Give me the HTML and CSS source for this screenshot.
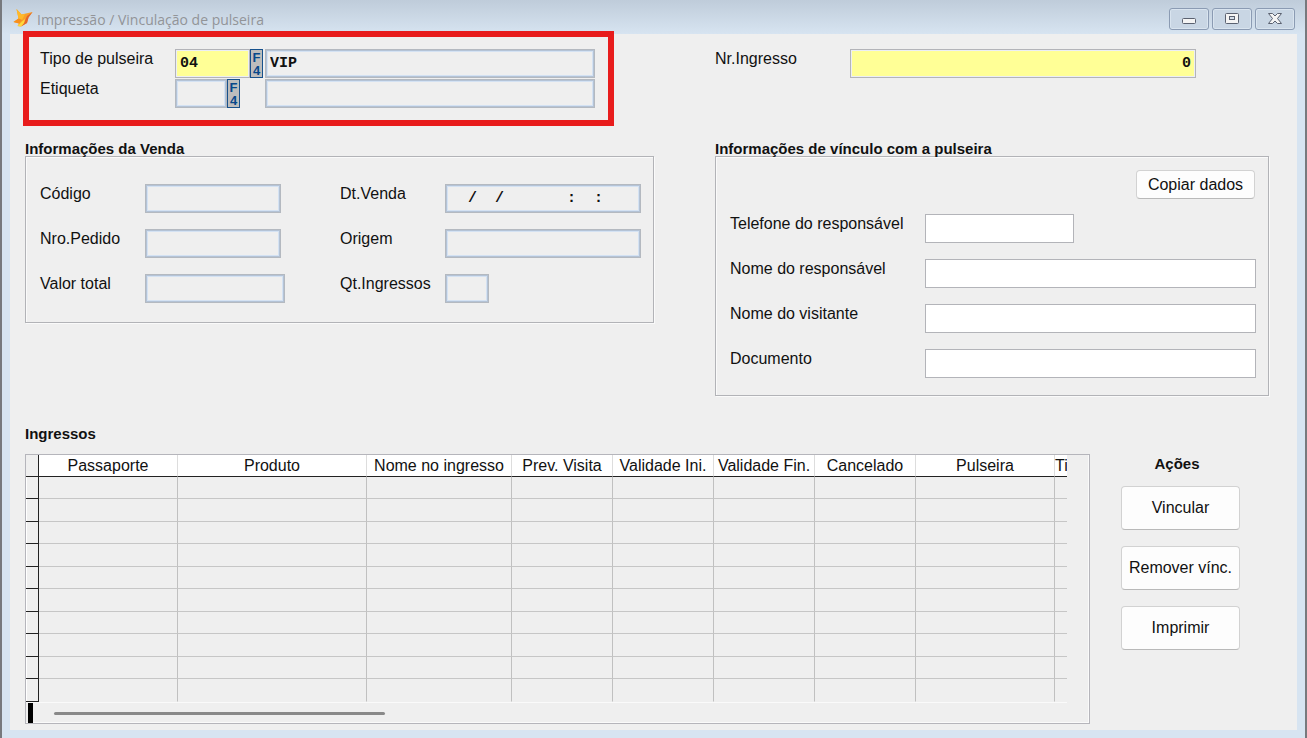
FILE: index.html
```html
<!DOCTYPE html>
<html lang="pt-BR">
<head>
<meta charset="utf-8">
<title>Impressão / Vinculação de pulseira</title>
<link rel="stylesheet" href="styles.css">
</head>
<body>
<div class="window">
  <header class="titlebar">
    <svg class="fox" viewBox="0 0 20 20" aria-hidden="true">
      <path d="M3.500 1 8.500 6.500 19.500 4 15.500 9.500 14 15 8 18.500 4.500 18 6 15.500 .5 14 5.500 10.500Z" fill="#f7a12a"/>
      <path d="M3.500 1 8.500 6.500 12 6 9 12 5.500 10.500Z" fill="#ffb928"/>
      <path d="M19.500 4 15.500 9.500 14 15 8 18.500 11 15 14 8Z" fill="#e4672b"/>
      <path d="M.5 14 5.500 10.500 9 12 6 15.500Z" fill="#f98f1c"/>
      <path d="M4.500 18 9 13.500 12 11 11 15 8 18.500Z" fill="#ffd83a"/>
    </svg>
    <h1 class="title">Impressão / Vinculação de pulseira</h1>
    <div class="controls">
      <button class="control" aria-label="Minimizar"><svg viewBox="0 0 18 14"><rect x="2.500" y="6.500" width="13" height="5" rx="1" fill="#f4f4f4" stroke="#5a6170"/></svg></button>
      <button class="control" aria-label="Maximizar"><svg viewBox="0 0 18 14"><rect x="2.500" y="1.500" width="13" height="10" rx="1" fill="#f4f4f4" stroke="#5a6170"/><rect x="6.500" y="4.500" width="5" height="3" fill="#d5dfea" stroke="#5a6170"/></svg></button>
      <button class="control" aria-label="Fechar"><svg viewBox="0 0 18 14"><path d="M2.500 1.500h4L9 4l2.500-2.500h4L11.500 6.500l4 5h-4L9 9l-2.500 2.500h-4l4-5Z" fill="#f4f4f4" stroke="#5a6170"/></svg></button>
    </div>
  </header>
  <main class="client">
    <div class="columns">
      <div class="lookup">
        <label for="tipo">Tipo de pulseira</label>
        <div class="code"><input id="tipo" class="field required w-type" value="04"><button class="f4" aria-label="Buscar tipo"><span>F</span><span>4</span></button></div>
        <input class="field locked" aria-label="Descrição do tipo" value="VIP" readonly>
        <label for="etiqueta">Etiqueta</label>
        <div class="code"><input id="etiqueta" class="field locked w-tag"><button class="f4" aria-label="Buscar etiqueta"><span>F</span><span>4</span></button></div>
        <input class="field locked" aria-label="Descrição da etiqueta" readonly>
        <div class="highlight"></div>
      </div>
      <div class="ticket">
        <label for="ingresso">Nr.Ingresso</label>
        <input id="ingresso" class="field required number" value="0">
      </div>
      <section class="group">
        <h2>Informações da Venda</h2>
        <div class="box sale">
          <label for="codigo">Código</label><input id="codigo" class="field locked w-code" readonly>
          <label for="data">Dt.Venda</label><input id="data" class="field locked" value="  /  /       :  :" readonly>
          <label for="pedido">Nro.Pedido</label><input id="pedido" class="field locked w-code" readonly>
          <label for="origem">Origem</label><input id="origem" class="field locked" readonly>
          <label for="valor">Valor total</label><input id="valor" class="field locked w-total" readonly>
          <label for="qtd">Qt.Ingressos</label><input id="qtd" class="field locked w-count" readonly>
        </div>
      </section>
      <section class="group">
        <h2>Informações de vínculo com a pulseira</h2>
        <div class="box link">
          <button class="button copy">Copiar dados</button>
          <label for="telefone">Telefone do responsável</label><input id="telefone" class="field w-phone">
          <label for="responsavel">Nome do responsável</label><input id="responsavel" class="field">
          <label for="visitante">Nome do visitante</label><input id="visitante" class="field">
          <label for="documento">Documento</label><input id="documento" class="field">
        </div>
      </section>
    </div>
    <div class="bottom">
      <section class="tickets">
        <h2>Ingressos</h2>
        <div class="grid">
          <div class="viewport">
            <table>
              <colgroup><col class="c-mark"><col class="c-pass"><col class="c-prod"><col class="c-name"><col class="c-mid"><col class="c-mid"><col class="c-mid"><col class="c-mid"><col class="c-pass"><col class="c-cut"></colgroup>
              <thead><tr><th></th><th>Passaporte</th><th>Produto</th><th>Nome no ingresso</th><th>Prev. Visita</th><th>Validade Ini.</th><th>Validade Fin.</th><th>Cancelado</th><th>Pulseira</th><th>Ti</th></tr></thead>
              <tbody>
                <tr><td></td><td></td><td></td><td></td><td></td><td></td><td></td><td></td><td></td><td></td></tr>
                <tr><td></td><td></td><td></td><td></td><td></td><td></td><td></td><td></td><td></td><td></td></tr>
                <tr><td></td><td></td><td></td><td></td><td></td><td></td><td></td><td></td><td></td><td></td></tr>
                <tr><td></td><td></td><td></td><td></td><td></td><td></td><td></td><td></td><td></td><td></td></tr>
                <tr><td></td><td></td><td></td><td></td><td></td><td></td><td></td><td></td><td></td><td></td></tr>
                <tr><td></td><td></td><td></td><td></td><td></td><td></td><td></td><td></td><td></td><td></td></tr>
                <tr><td></td><td></td><td></td><td></td><td></td><td></td><td></td><td></td><td></td><td></td></tr>
                <tr><td></td><td></td><td></td><td></td><td></td><td></td><td></td><td></td><td></td><td></td></tr>
                <tr><td></td><td></td><td></td><td></td><td></td><td></td><td></td><td></td><td></td><td></td></tr>
                <tr><td></td><td></td><td></td><td></td><td></td><td></td><td></td><td></td><td></td><td></td></tr>
              </tbody>
            </table>
          </div>
          <div class="scroll"><div class="split"></div><div class="thumb"></div></div>
        </div>
      </section>
      <section class="actions">
        <h2>Ações</h2>
        <button class="button tall">Vincular</button>
        <button class="button tall">Remover vínc.</button>
        <button class="button tall">Imprimir</button>
      </section>
    </div>
  </main>
</div>
</body>
</html>
```

FILE: styles.css
```css
* { box-sizing: border-box; }
body {
  margin: 0;
  font: 16px/20px "Liberation Sans", Arial, sans-serif;
  color: #111;
}
button, input { font: inherit; color: inherit; margin: 0; padding: 0; }
h1, h2 { margin: 0; font-size: 15px; line-height: 20px; }

.window {
  min-height: 100vh;
  display: flex;
  flex-direction: column;
  padding: 0 8px 8px;
  border: solid #77797d;
  border-width: 0 2px;
  background: linear-gradient(#bfccda, #d7e4f1 34px);
}
.titlebar {
  display: flex;
  align-items: flex-start;
  height: 34px;
  padding: 8px 2px 0 3px;
}
.fox { width: 20px; height: 20px; }
.title {
  margin: 2px auto 0 4px;
  font: 14px/20px "Open Sans", "Noto Sans", sans-serif;
  color: #929498;
}
.controls { display: flex; gap: 3px; }
.control {
  width: 40px;
  height: 22px;
  border: 1px solid #8b9bb3;
  border-radius: 3px;
  background: #c9d6e4;
  box-shadow: inset 0 0 0 1px #d9e4ef;
}
.control svg { display: block; width: 18px; height: 14px; margin: auto; }

.client { flex: 1; padding: 15px 28px 0 15px; background: #efefef; }
.columns {
  display: grid;
  grid-template-columns: 690fr 554fr;
  row-gap: 31px;
}
.lookup {
  position: relative;
  display: grid;
  grid-template-columns: 135px 90px 330px;
  row-gap: 1px;
  align-items: start;
  padding-left: 15px;
}
.highlight {
  position: absolute;
  top: -18px;
  left: -2px;
  width: 591px;
  height: 95px;
  border: 6px solid #e81c1c;
  pointer-events: none;
}
.code { display: flex; }
.field {
  width: 100%;
  height: 29px;
  padding: 0 4px;
  border: 1px solid #b3b4b9;
  border-radius: 0;
  background: #fff;
  font: bold 15px "Liberation Mono", monospace;
  outline: 0;
}
.required { background: #ffff96; box-shadow: inset 0 0 0 1px #eceef5; }
.locked { background: #efefef; border: 1px solid #b4b9c0; box-shadow: inset 0 0 0 1px #b4c3d6, inset 0 0 0 2px #d4e2f3; }
.number { text-align: right; }
.w-type { width: 75px; }
.w-tag { width: 52px; }
.w-code { width: 136px; }
.w-total { width: 140px; }
.w-count { width: 44px; }
.w-phone { width: 149px; }
.f4 {
  display: flex;
  flex-direction: column;
  align-items: center;
  justify-content: center;
  width: 13px;
  height: 29px;
  border: 1px solid #17518c;
  background: #bdbdbd;
  color: #07488a;
  font: bold 13px/13px "Liberation Sans", Arial, sans-serif;
}
.ticket {
  display: grid;
  grid-template-columns: 135px 1fr;
  align-items: start;
  padding-right: 73px;
}
.box {
  display: grid;
  align-items: start;
  border: 1px solid #b2b3b7;
  box-shadow: inset 1px 1px #fafafa, 1px 1px #fafafa;
  margin-top: -3px;
}
.sale {
  grid-template-columns: 105px 195px 105px 1fr;
  row-gap: 16px;
  margin-right: 61px;
  padding: 27px 12px 19px 14px;
}
.link {
  grid-template-columns: 195px 1fr;
  row-gap: 16px;
  padding: 13px 12px 17px 14px;
}
.button {
  border: 1px solid #d2d2d2;
  border-bottom-color: #b9b9b9;
  border-radius: 4px;
  background: #fdfdfd;
}
.copy { grid-column: 1 / -1; justify-self: end; width: 119px; height: 29px; margin: 0 1px -1px 0; }

.bottom { display: flex; align-items: flex-start; justify-content: space-between; gap: 31px; margin-top: 28px; }
.tickets { flex: 1; min-width: 0; }
.grid { margin-top: 10px; border: 1px solid #b5b5bb; box-shadow: inset -1px -1px #fafafa; }
.viewport { width: 1041px; max-width: 100%; overflow: hidden; border-bottom: 1px solid #fafafa; }
table { width: 1041px; table-layout: fixed; border-collapse: separate; border-spacing: 0; }
.c-mark { width: 13px; }
.c-pass { width: 139px; }
.c-prod { width: 189px; }
.c-name { width: 145px; }
.c-mid { width: 101px; }
.c-cut { width: 12px; }
th {
  height: 22px;
  padding: 0;
  border-right: 1px solid #ddd;
  border-bottom: 1px solid #222;
  background: #fff;
  font-weight: 400;
  white-space: nowrap;
}
td { height: 22px; padding: 0; border-right: 1px solid #c0c0c0; border-bottom: 1px solid #c6c6c6; }
tr:nth-child(even) td { height: 23px; }
tr:last-child td { border-bottom-color: transparent; }
tr :last-child { border-right: 0; }
tr :first-child { border-right: 1px solid #222; }
th:first-child { background: #efefef; }
tr td:first-child, tr:last-child td:first-child { border-bottom: 1px solid #222; box-shadow: inset 1px 0 #fff; }
.scroll { display: flex; align-items: center; height: 20px; padding-left: 2px; }
.split { width: 5px; height: 20px; background: #000; }
.thumb { width: 331px; height: 3px; margin-left: 21px; border-radius: 2px; background: #898989; }
.actions { flex: none; display: flex; flex-direction: column; gap: 16px; width: 119px; margin: 30px 29px 0 0; }
.actions h2 { margin: 0 0 -4px; padding-right: 7px; text-align: center; }
.tall { height: 44px; }
```
